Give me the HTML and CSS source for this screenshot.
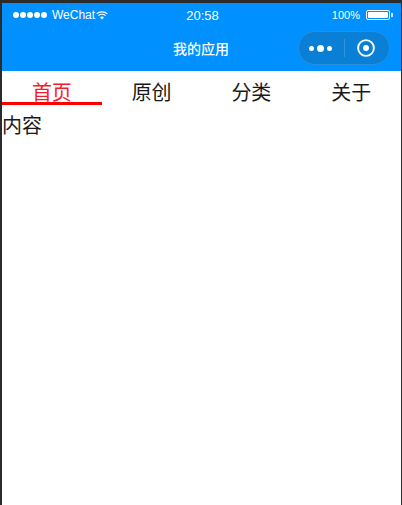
FILE: index.html
```html
<!DOCTYPE html>
<html lang="zh">
<head>
<meta charset="utf-8">
<title>我的应用</title>
<link rel="stylesheet" href="styles.css">
</head>
<body>
<div class="phone">
  <header class="head">
    <div class="status">
      <div class="status-left">
        <span class="dots"><i></i><i></i><i></i><i></i><i></i></span>
        <span class="carrier">WeChat</span>
        <svg class="wifi" width="12" height="9" viewBox="0 0 12 9"><path d="M.6 2.8C3.6.2 8.4.2 11.4 2.8M2.4 4.6c2-1.7 5.2-1.7 7.2 0" fill="none" stroke="#fff" stroke-width="1.1"/><path d="M4 6.2c1.2-.9 2.8-.9 4 0L6 8.4z" fill="#fff"/></svg>
      </div>
      <div class="time">20:58</div>
      <div class="status-right">
        <span>100%</span>
        <span class="battery"><span class="level"></span></span>
        <span class="tip"></span>
      </div>
    </div>
    <div class="nav">
      <div class="title">我的应用</div>
      <div class="capsule">
        <div class="more"><i></i><i class="mid"></i><i></i></div>
        <div class="sep"></div>
        <svg class="target" width="20" height="20" viewBox="0 0 20 20"><circle cx="10" cy="10" r="7.9" fill="none" stroke="#fff" stroke-width="1.9"/><circle cx="10" cy="10" r="3" fill="#fff"/></svg>
      </div>
    </div>
  </header>
  <nav class="tabs">
    <div class="tab active">首页</div>
    <div class="tab">原创</div>
    <div class="tab">分类</div>
    <div class="tab">关于</div>
  </nav>
  <div class="content">内容</div>
</div>
</body>
</html>
```
FILE: styles.css
```css
* { box-sizing: border-box; }
html, body { margin: 0; height: 100%; }
body {
  background: #2b2b2b;
  padding: 3px 1px 0 2px;
  height: 505px;
  overflow: hidden;
  font-family: "Liberation Sans", "Noto Sans CJK SC", sans-serif;
}
.phone { background: #fff; height: 502px; color: #1a1a1a; }
.head { background: #0090ff; height: 68px; color: #fff; }
.status {
  height: 24px;
  display: grid;
  grid-template-columns: 1fr 1fr 1fr;
  align-items: center;
  padding: 0 8px 0 11px;
  font-size: 12px;
}
.status-left { display: flex; align-items: center; }
.dots { display: flex; gap: 1px; margin-right: 5px; }
.dots i { width: 6px; height: 6px; border-radius: 50%; background: #fff; }
.carrier { margin-right: 1px; }
.wifi { margin-top: 1px; }
.time { text-align: center; font-size: 13px; margin-left: -1px; }
.status-right { display: flex; align-items: center; justify-content: flex-end; font-size: 11px; }
.battery {
  width: 24px; height: 10px; margin-left: 6px;
  border: 1px solid #fff; border-radius: 2px; padding: 1px; display: flex;
}
.level { flex: 1; background: #fff; border-radius: 1px; }
.tip { width: 2px; height: 4px; margin-left: 1px; background: #cfe9ff; }
.nav {
  height: 44px;
  display: flex;
  align-items: center;
  justify-content: flex-end;
  padding: 0 11px 2px 0;
  position: relative;
}
.title {
  position: absolute;
  left: 171px;
  top: 13px;
  font-size: 14px;
  line-height: 16px;
  font-weight: 500;
  font-family: "Noto Sans CJK SC", sans-serif;
}
.capsule {
  width: 92px; height: 34px;
  border-radius: 17px;
  background: #0a7fd6;
  border: 1px solid #2690e0;
  display: flex;
  align-items: center;
  padding-left: 10px;
}
.more { display: flex; align-items: center; gap: 3px; width: 35px; }
.more i { width: 5px; height: 5px; border-radius: 50%; background: #fff; }
.more i.mid { width: 7px; height: 7px; }
.sep { width: 1px; height: 18px; background: #2f93df; margin-right: 11px; }
.tabs { display: flex; height: 34px; }
.tab {
  flex: 1;
  text-align: center;
  font-size: 20px;
  line-height: 24px;
  padding-top: 9px;
  font-family: "Noto Sans CJK SC", sans-serif;
}
.active { color: #f31b2c; border-bottom: 3px solid #f00; }
.content {
  font-size: 20px;
  line-height: 30px;
  height: 30px;
  font-family: "Noto Sans CJK SC", sans-serif;
  margin-top: 5px;
}
```
